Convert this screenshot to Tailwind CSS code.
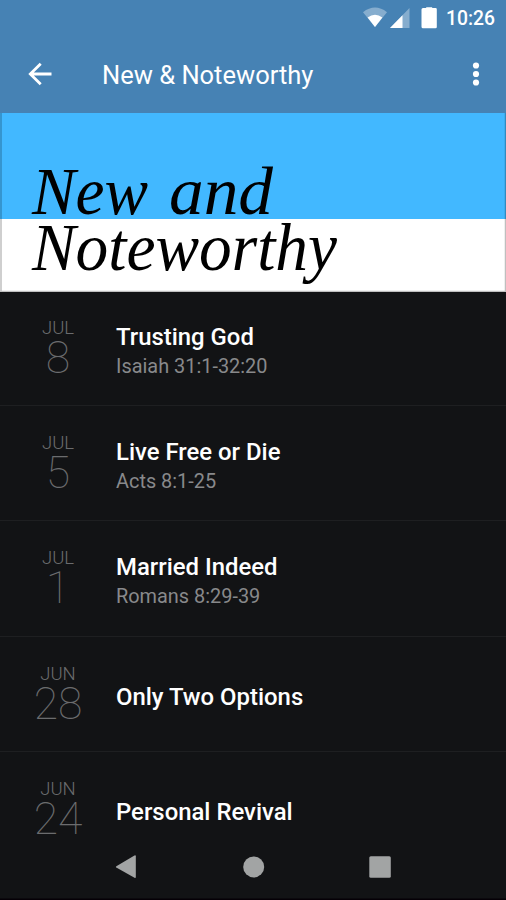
<!DOCTYPE html>
<html lang="en">
<head>
<meta charset="utf-8">
<title>New &amp; Noteworthy</title>
<script src="https://cdn.jsdelivr.net/npm/@tailwindcss/browser@4"></script>
</head>
<body class="bg-[#121315]">
<div class="relative w-[506px] h-[900px] overflow-hidden bg-[#121315] font-['Roboto',sans-serif] flex flex-col whitespace-nowrap">
  <header class="h-[113px] shrink-0 bg-[#4682b4] text-white">
    <div class="h-9 flex items-start justify-end pr-[11px]">
      <svg class="w-[82px] h-9 mr-[2px]" viewBox="0 0 82 36">
        <path d="M1 12.2Q13 3 25 12.2L13 27Z" fill="#fff" fill-opacity=".35"/>
        <path d="M5.600 17.400Q13 12.200 20.400 17.400L13 27Z" fill="#fff"/>
        <path d="M47.500 8V28H28Z" fill="#fff" fill-opacity=".35"/>
        <path d="M40.500 15.200V28H28Z" fill="#fff"/>
        <path d="M61 8h3.200v-.8h6v.8h3.300a1.300 1.300 0 0 1 1.300 1.300V27a1.300 1.300 0 0 1-1.300 1.300h-12.500a1.500 1.500 0 0 1-1.500-1.500V9.500a1.500 1.500 0 0 1 1.500-1.500Z" fill="#fff"/>
      </svg>
      <span class="mt-[8px] text-[19.300px] leading-[22px] font-medium w-[49px]">10:26</span>
    </div>
    <div class="h-[77px] flex items-center pl-[27px] pr-[18px]">
      <svg class="w-6 h-6 overflow-visible" viewBox="0 0 24 24" fill="none" stroke="#fff" stroke-width="2.800"><path d="M24.500 11H3M13.700.7 3.300 11l10.400 10.300"/></svg>
      <h1 class="ml-[51px] flex-1 text-[25.500px] leading-7 font-normal">New &amp; Noteworthy</h1>
      <svg class="w-6 h-6 overflow-visible" viewBox="0 0 24 24" fill="#fff"><circle cx="12" cy="2.500" r="3.100"/><circle cx="12" cy="11" r="3.100"/><circle cx="12" cy="19.500" r="3.100"/></svg>
    </div>
  </header>
  <svg class="w-[506px] h-[179px] shrink-0" viewBox="0 0 506 179">
    <rect width="506" height="106" fill="#42b8ff"/>
    <rect y="106" width="506" height="73" fill="#fff"/>
    <path d="M1 0V179M505.500 0V179M0 178.500H506" fill="none" stroke="#000" stroke-opacity=".25" stroke-width="1.500"/>
    <g font-family="'Liberation Serif', serif" font-style="italic" font-size="67" fill="#000">
      <text x="32" y="100.500" textLength="116" lengthAdjust="spacingAndGlyphs">New</text>
      <text x="169" y="100.500" textLength="104" lengthAdjust="spacingAndGlyphs">and</text>
      <text x="32" y="156.500" textLength="305" lengthAdjust="spacingAndGlyphs">Noteworthy</text>
    </g>
  </svg>
  <main>
    <section class="h-[114px] flex border-b border-[#1e1f21]">
      <div class="w-[116px] pt-[26px] text-center text-[#6b6c6e]"><div class="text-[18.500px] leading-5 font-light">JUL</div><div class="text-[44.500px] leading-[41px] font-thin">8</div></div>
      <div class="pt-[31px]"><h2 class="text-[23.900px] leading-7 font-medium text-white">Trusting God</h2><p class="mt-[3px] text-[19.900px] leading-[26px] text-[#88898b]">Isaiah 31:1-32:20</p></div>
    </section>
    <section class="h-[115px] flex border-b border-[#1e1f21]">
      <div class="w-[116px] pt-[27px] text-center text-[#6b6c6e]"><div class="text-[18.500px] leading-5 font-light">JUL</div><div class="text-[44.500px] leading-[41px] font-thin">5</div></div>
      <div class="pt-[32px]"><h2 class="text-[23.900px] leading-7 font-medium text-white">Live Free or Die</h2><p class="mt-[3px] text-[19.900px] leading-[26px] text-[#88898b]">Acts 8:1-25</p></div>
    </section>
    <section class="h-[116px] flex border-b border-[#1e1f21]">
      <div class="w-[116px] pt-[27px] text-center text-[#6b6c6e]"><div class="text-[18.500px] leading-5 font-light">JUL</div><div class="text-[44.500px] leading-[41px] font-thin">1</div></div>
      <div class="pt-[32px]"><h2 class="text-[23.900px] leading-7 font-medium text-white">Married Indeed</h2><p class="mt-[3px] text-[19.900px] leading-[26px] text-[#88898b]">Romans 8:29-39</p></div>
    </section>
    <section class="h-[115px] flex border-b border-[#1e1f21]">
      <div class="w-[116px] pt-[27px] text-center text-[#6b6c6e]"><div class="text-[18.500px] leading-5 font-light">JUN</div><div class="text-[44.500px] leading-[41px] font-thin">28</div></div>
      <div class="pt-[46px]"><h2 class="text-[23.900px] leading-7 font-medium text-white">Only Two Options</h2></div>
    </section>
    <section class="h-[115px] flex">
      <div class="w-[116px] pt-[27px] text-center text-[#6b6c6e]"><div class="text-[18.500px] leading-5 font-light">JUN</div><div class="text-[44.500px] leading-[41px] font-thin">24</div></div>
      <div class="pt-[46px]"><h2 class="text-[23.900px] leading-7 font-medium text-white">Personal Revival</h2></div>
    </section>
  </main>
  <nav class="absolute left-0 bottom-0">
    <svg class="w-[506px] h-[60px]" viewBox="0 0 506 60" fill="#a2a4a4">
      <path d="M116.300 26.200 134.500 15.400q1.300-.7 1.300.8V37q0 1.500-1.300.8L116.300 27.600q-1-.7 0-1.400Z"/>
      <circle cx="253.700" cy="26.900" r="10.500"/>
      <rect x="369.300" y="16.200" width="21.500" height="21.500" rx="1.500"/>
      <rect y="58.500" width="506" height="1.500" fill="#050006"/>
    </svg>
  </nav>
</div>
</body>
</html>
